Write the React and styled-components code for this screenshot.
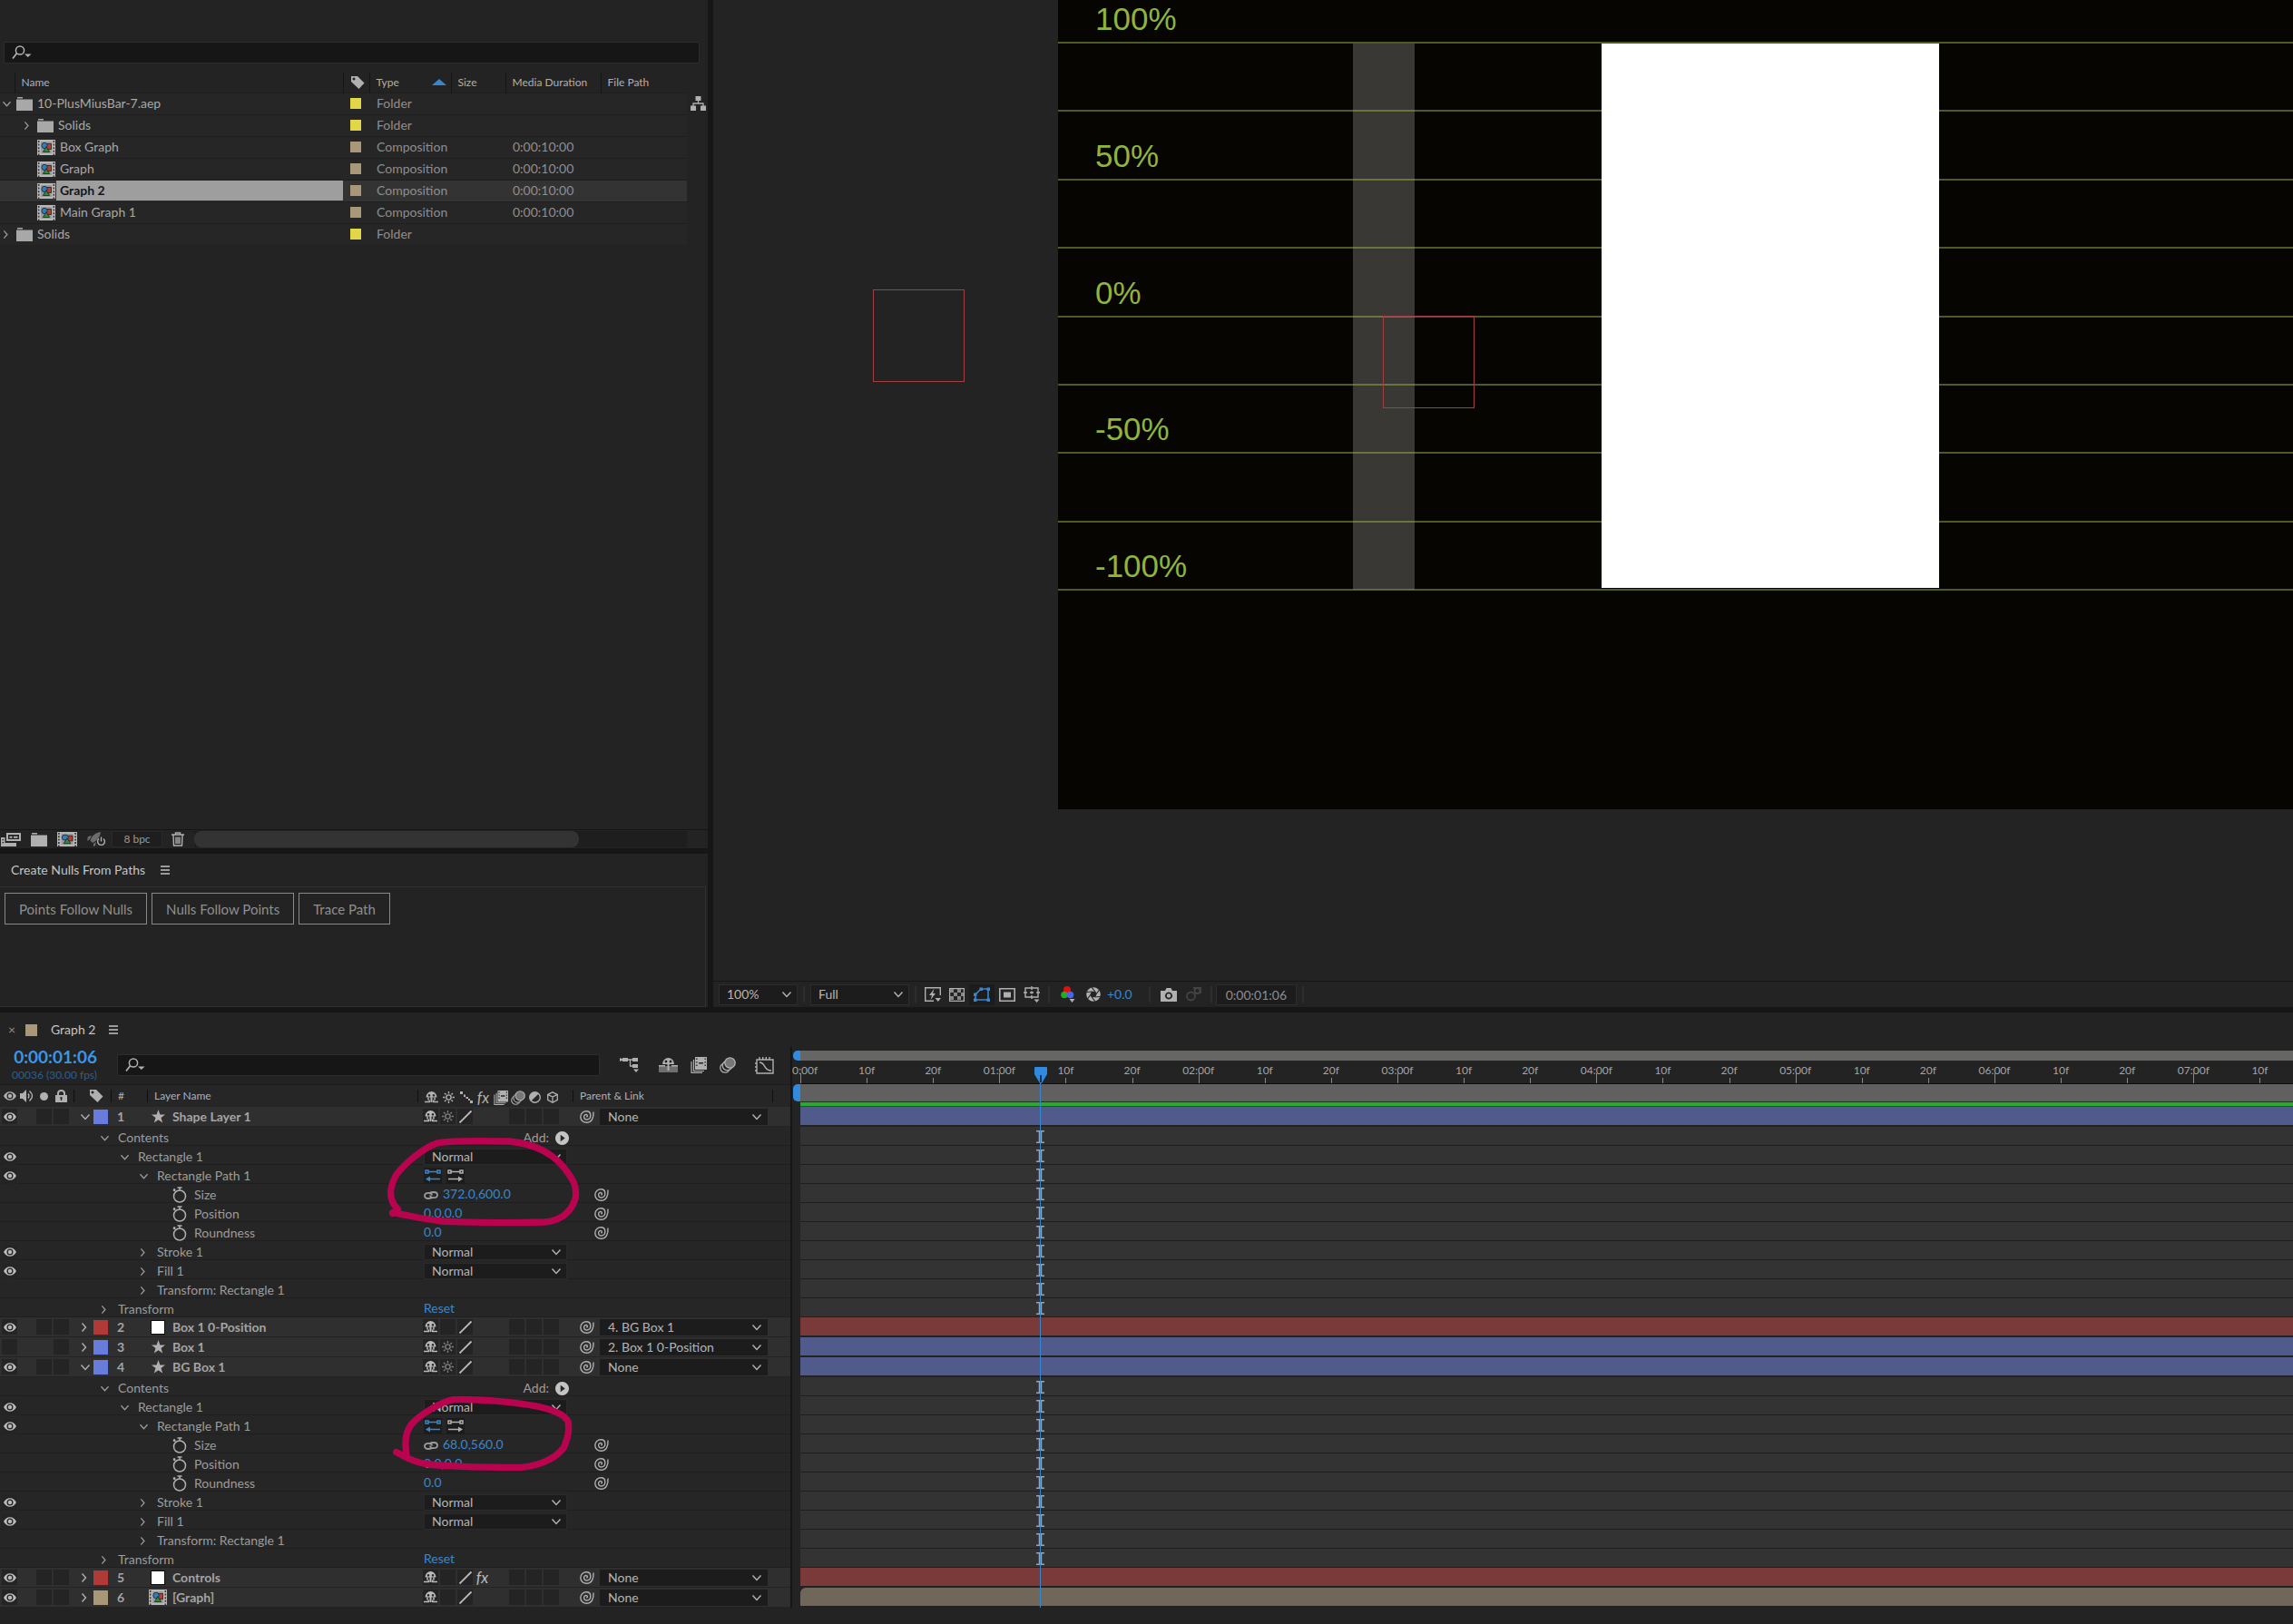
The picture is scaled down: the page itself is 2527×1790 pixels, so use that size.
import React, { useState } from "react";
import styled, { createGlobalStyle } from "styled-components";

const GlobalStyle = createGlobalStyle`
  * {
    box-sizing: border-box;
  }
  body {
    margin: 0;
    background: #161616;
  }
  button, input, select {
    font: inherit;
    color: inherit;
    margin: 0;
  }
`;

const Page = styled.div`
  display: flex;
  flex-direction: column;
  gap: 6px;
  min-height: 100vh;
  font-family: Lato, "Liberation Sans", sans-serif;
  font-size: 14px;
  line-height: 20px;
  color: #b0b0b0;
  background: #161616;
  overflow: hidden;
`;

const Workspace = styled.div`
  display: flex;
  flex: 1;
  gap: 6px;
`;

const Sidebar = styled.div`
  display: flex;
  flex-direction: column;
  flex: none;
  gap: 6px;
  width: 780px;
`;

const Svg = styled.svg`
  display: block;
  flex: none;
  width: ${({ $w }) => $w}px;
  height: ${({ $h, $w }) => $h || $w}px;
  fill: currentColor;
  stroke: none;
  overflow: visible;
`;

const Line = styled(Svg)`
  fill: none;
  stroke: currentColor;
  stroke-width: ${({ $sw }) => $sw || 2};
`;

/* ---------- icons ---------- */

const Chevron = ({ open, size = 10 }) => (
    <Line $w={size} $sw={1.4} viewBox="0 0 10 10">
        <path d={open ? "M0.5 2.5 5 7.5 9.5 2.5" : "M1.5 0.5 5.5 5 1.5 9.5"} />
    </Line>
);

const SearchIcon = () => (
    <Svg $w={22} $h={16} viewBox="0 0 22 16">
        <circle cx="9" cy="5.5" r="4.6" fill="none" stroke="currentColor" strokeWidth="1.5" />
        <path d="M5.5 8.8 1 14.5" stroke="currentColor" strokeWidth="1.8" />
        <path d="M14 9.5h7.5L17.8 13z" />
    </Svg>
);

const TagIcon = () => (
    <Svg $w={16} viewBox="0 0 16 16">
        <path fillRule="evenodd" d="M1 1h7l7.5 7.5L9.5 15 1 7zM4 2.6a1.5 1.5 0 1 0 .01 0z" />
    </Svg>
);

const FolderIcon = () => (
    <Svg $w={18} $h={15} viewBox="0 0 18 15">
        <path d="M1 0h6v1.4H1zM0 2.4h18V15H0z" />
    </Svg>
);

const CompIcon = ({ w = 20, h = 17 }) => (
    <Svg $w={w} $h={h} viewBox="0 0 20 17" preserveAspectRatio="none">
        <path fill="#b8b8b8" d="M0 0h20v17H0z" />
        <path stroke="#3a3a3a" strokeWidth="1.6" strokeDasharray="2 1.6" d="M1.7 1v16M18.3 1v16" />
        <path fill="#9a9a9a" d="M4 2h12v13H4z" />
        <path fill="#c0392f" stroke="#222" strokeWidth=".8" d="M10.5 4.5h5v6h-5z" />
        <circle cx="8" cy="6.5" r="3.2" fill="#2f7fc0" stroke="#222" strokeWidth=".8" />
        <path fill="#2d8a3a" stroke="#222" strokeWidth=".8" d="m10 7.5 3.6 6H6.4z" />
    </Svg>
);

const FlowchartIcon = () => (
    <Svg $w={17} $h={16} viewBox="0 0 17 16">
        <path d="M5.5 0h6v5h-6zM0 10.5h6V16H0zM11 10.5h6V16h-6z" />
        <path fill="none" stroke="currentColor" strokeWidth="1.3" d="M8.5 4v4M3 11V8h11v3" />
    </Svg>
);

const FootageIcon = () => (
    <Svg $w={22} $h={15} viewBox="0 0 22 15">
        <path fillRule="evenodd" d="M6 0h16v9H6zM8 2v5h12V2z" />
        <path d="M9.5 3.7h3v2h-3zM14 3.7h4.5v2H14z" />
        <path fillRule="evenodd" d="M0 5h4.5v6H17v4H0zM1.5 7v1.3H3V7zM1.5 10v1.3H3V10z" />
    </Svg>
);

const RocketIcon = () => (
    <Svg $w={20} $h={16} viewBox="0 0 20 16">
        <path fill="#6c6c6c" d="M15 0C8 1 5 5 3.5 9.5L6 12c4-2 8-5 9-12zM1 5l4-1-2 4-3 2zM7 13l3-2-1 4-2 1z" />
        <path fill="none" stroke="currentColor" strokeWidth="1.4" d="M13 7.5a3.9 3.9 0 1 0 5 0M15.5 5.5v5" />
    </Svg>
);

const TrashIcon = () => (
    <Line $w={14} $h={16} $sw={1.4} viewBox="0 0 14 16">
        <path d="M0 3h14M4.5 3V1h5v2M2 3.5 2.5 15h9L12 3.5M5 5.5V13M7 5.5V13M9 5.5V13" />
    </Line>
);

const MenuIcon = () => (
    <Line $w={10} $h={10} $sw={1.3} viewBox="0 0 10 10">
        <path d="M0 1h10M0 5h10M0 9h10" />
    </Line>
);

const EyeIcon = () => (
    <Svg $w={14} $h={10} viewBox="0 0 14 10">
        <path fillRule="evenodd" d="M7 .2C10 .2 12.5 2.2 14 5 12.5 7.8 10 9.8 7 9.8S1.5 7.8 0 5C1.5 2.2 4 .2 7 .2zM7 1.5A3.5 3.5 0 1 0 7 8.5 3.5 3.5 0 0 0 7 1.5z" />
        <circle cx="7" cy="5" r="2.2" />
    </Svg>
);

const SpeakerIcon = () => (
    <Svg $w={16} $h={14} viewBox="0 0 16 14">
        <path d="M0 4h3l4-4v14l-4-4H0z" />
        <path fill="none" stroke="currentColor" strokeWidth="1.4" d="M9 4.5q1.8 2.5 0 5M10.5 1.5q6 5.5 0 11" />
    </Svg>
);

const LockIcon = () => (
    <Svg $w={13} $h={14} viewBox="0 0 13 14">
        <path fillRule="evenodd" d="M0 6h13v8H0zM6.5 8a1.2 1.2 0 0 0-.7 2.2V12h1.4v-1.8A1.2 1.2 0 0 0 6.5 8z" />
        <path fill="none" stroke="currentColor" strokeWidth="2" d="M3 6.5V4a3.5 3 0 0 1 7 0v2.5" />
    </Svg>
);

const StarIcon = () => (
    <Svg $w={15} viewBox="0 0 15 15">
        <path d="m7.5 0 1.9 5.4H15l-4.5 3.5 1.7 5.7L7.5 11.2l-4.7 3.4 1.7-5.7L0 5.400h5.600z" />
    </Svg>
);

const ShyIcon = () => (
    <Svg $w={15} $h={13} viewBox="0 0 15 13">
        <path fillRule="evenodd" d="M1.5 6.5a6 6.5 0 0 1 12 0zM5 3a1.3 1.3 0 1 0 .01 0zM10 3a1.3 1.3 0 1 0 .01 0z" />
        <path d="M6.500 6h2v6h-2z" />
        <path fill="none" stroke="currentColor" strokeWidth="1.5" d="M4 6.5v3M11 6.5v3M0 11.5h5.3V9.5M9.7 9.5v2H15" />
    </Svg>
);

const SunIcon = () => (
    <Line $w={13} $sw={1.4} viewBox="0 0 13 13">
        <circle cx="6.5" cy="6.5" r="2.6" />
        <path d="M6.5 0v2.5M6.5 10.5V13M0 6.5h2.5M10.5 6.5H13M2 2l1.6 1.6M9.4 9.4 11 11M11 2 9.4 3.6M3.6 9.4 2 11" />
    </Line>
);

const SlashIcon = () => (
    <Line $w={14} $sw={1.8} viewBox="0 0 14 14">
        <path d="M.5 13.5l13-13" />
    </Line>
);

const DashIcon = () => (
    <Svg $w={14} $h={13} viewBox="0 0 14 13">
        <path d="M0 0h3v3H0zM4 3.500h2V6H4zM6.500 6H9v2H6.500zM9 8h2v2H9zM11 10h3v3h-3z" />
    </Svg>
);

const BlendIcon = ({ w = 16 }) => (
    <Svg $w={w} viewBox="0 0 18 18">
        <path fillRule="evenodd" d="M5 0h13v14H5zM6.2 1.5v1.5h1.3V1.5zM6.2 5v1.5h1.3V5zM6.2 8.5V10h1.3V8.5zM15.5 1.5v1.5h1.3V1.5zM15.5 5v1.5h1.3V5zM15.5 8.5V10h1.3V8.5zM9 6v1.500h5V6z" />
        <path fill="none" stroke="currentColor" strokeWidth="1.2" d="M3.5 3v12.5H15M1 5v12.4h12" />
    </Svg>
);

const MotionIcon = ({ w = 16 }) => (
    <Svg $w={w} viewBox="0 0 18 18">
        <g fill="#232323" stroke="currentColor" strokeWidth="1.3">
            <circle cx="6" cy="12" r="5.2" />
            <circle cx="8.5" cy="9.5" r="5.2" />
            <circle cx="11.5" cy="6.5" r="5.7" fill="#777" />
        </g>
    </Svg>
);

const AdjustIcon = () => (
    <Svg $w={13} viewBox="0 0 13 13">
        <circle cx="6.5" cy="6.5" r="5.8" fill="none" stroke="currentColor" strokeWidth="1.4" />
        <path d="M10.6 2.4A5.8 5.8 0 0 0 2.4 10.6z" />
    </Svg>
);

const CubeIcon = () => (
    <Line $w={12} $h={13} $sw={1.3} viewBox="0 0 12 13">
        <path d="M6 .8 11.3 3.3v6L6 12.2.7 9.3v-6zM.7 3.3 6 6l5.3-2.7M6 6v6" />
    </Line>
);

const WhipIcon = () => (
    <Line $w={16} $h={14} $sw={1.4} viewBox="0 0 16 14">
        <path d="M15 1.5C15.500 8 13 13.200 7.500 13.200 3.500 13.200 .8 10.500 .8 7 .8 3.200 4 .8 7.200 .8 10 .8 11.800 2.800 11.800 5.500 11.800 8.500 10 10 7.800 10 5.800 10 4.600 8.700 4.600 7 4.600 5.300 6 4.200 7.500 4.600 8.700 5 8.800 6.800 7.300 7" />
    </Line>
);

const WatchIcon = () => (
    <Line $w={16} $h={18} $sw={1.5} viewBox="0 0 16 18">
        <circle cx="8" cy="10.5" r="6.5" />
        <path d="M5.5 1h5M8 1v3M1.3 2.5l2 2M1 4.5l2-2" />
    </Line>
);

const LinkIcon = () => (
    <Line $w={16} $h={9} $sw={1.8} viewBox="0 0 16 9">
        <path d="M9.5 6.8C8.6 7.6 7 8 5 8 2.5 8 1 6.8 1 5s1.5-3.2 4-3.2S9 3 9 4.5M6.5 2.2C7.4 1.4 9 1 11 1c2.5 0 4 1.2 4 3s-1.5 3.2-4 3.2S7 6 7 4.5" />
    </Line>
);

const PathIcon = ({ back }) => (
    <Line $w={18} $h={14} $sw={1.5} viewBox="0 0 18 14">
        <path d="M1 1h3v3H1zM14 1h3v3h-3zM4 2.500h10" />
        <path d={back ? "M3 10.5h14" : "M1 10.5h14"} />
        <path fill="currentColor" stroke="none" d={back ? "M6 7.5v6L1 10.5z" : "M12 7.5v6l5-3z"} />
    </Line>
);

const AddIcon = () => (
    <Svg $w={15} viewBox="0 0 15 15">
        <path fill="#c4c4c4" fillRule="evenodd" d="M7.5 0a7.5 7.5 0 1 0 .01 0zM5.7 3.7v7.6l5-3.8z" />
    </Svg>
);

const MiniFlowIcon = () => (
    <Svg $w={22} $h={17} viewBox="0 0 22 17">
        <path d="M0 1l5 2-5 2zM3 1h6v4H3zM14 1h6v4h-6zM14 8h6v4h-6zM15 13.5h6L18 17z" />
        <path fill="none" stroke="currentColor" strokeWidth="1.3" d="M9 3h5M11.5 3v7H14" />
    </Svg>
);

const ShyMasterIcon = () => (
    <Svg $w={21} $h={17} viewBox="0 0 21 17">
        <path fill="#6f6f6f" d="M0 10h21v7H0z" />
        <path fillRule="evenodd" d="M4 8a6.5 7 0 0 1 13 0zM8 3.6a1.4 1.4 0 1 0 .01 0zM13 3.6a1.4 1.4 0 1 0 .01 0z" />
        <path d="M9.5 7h2v8h-2zM0 9h7v1.500H0zM14 9h7v1.500h-7z" />
    </Svg>
);

const GraphEditorIcon = () => (
    <Line $w={22} $h={20} $sw={1.4} viewBox="0 0 22 20">
        <path d="M2 4h18v15H2zM5 1v3M8.700 1v3M12.300 1v3M16 1v3M0 8h2M0 12h2M0 16h2M5 7c7 0 4 9 13 9" />
    </Line>
);

const FastIcon = () => (
    <Svg $w={18} $h={16} viewBox="0 0 18 16">
        <path fill="none" stroke="currentColor" strokeWidth="1.4" d="M10 15.3H.7V.7h16.6V9" />
        <path d="m10.5 2-5.5 7h3l-1.5 5 5.5-7H9zM11.5 12H18l-3.2 4z" />
    </Svg>
);

const CheckerIcon = () => (
    <Svg $w={17} $h={15} viewBox="0 0 17 15">
        <path fill="none" stroke="currentColor" strokeWidth="1.2" d="M.6.6h15.8v13.8H.6z" />
        <path fill="#888" d="M1 1h4v4H1zM9 1h4v4H9zM5 5h4v4H5zM13 5h3v4h-3zM1 9h4v4H1zM9 9h4v4H9z" />
    </Svg>
);

const MaskIcon = () => (
    <Line $w={18} $h={16} $sw={1.6} viewBox="0 0 18 16">
        <path d="M2 14V8l6-6h8v12z" />
        <path fill="currentColor" stroke="none" d="M0 12.5h3.5V16H0zM14.5 12.5H18V16h-3.5zM14.5.5H18V4h-3.5zM6.5.5H10V4H6.5zM0 6.5h3.5V10H0z" />
    </Line>
);

const RegionIcon = () => (
    <Svg $w={18} $h={15} viewBox="0 0 18 15">
        <path fill="none" stroke="currentColor" strokeWidth="1.6" d="M.8.8h16.4v13.4H.8z" />
        <path d="M5 4.5h8v6H5z" />
    </Svg>
);

const GuidesIcon = () => (
    <Svg $w={18} $h={18} viewBox="0 0 18 18">
        <path fill="none" stroke="currentColor" strokeWidth="1.4" d="M2 2h14v10H2zM9 0v4M9 10v4M0 7h4M14 7h4M7 7h4M9 5.5v3" />
        <path d="M11.5 14.5h6L14.5 18z" />
    </Svg>
);

const RgbIcon = () => (
    <Svg $w={16} $h={18} viewBox="0 0 16 18">
        <circle cx="7" cy="4" r="4" fill="#e01010" />
        <circle cx="4" cy="9.5" r="3.8" fill="#1fae1f" />
        <circle cx="10.5" cy="9.5" r="3.8" fill="#4a66e0" />
        <path d="M9.5 14h6l-3 4z" />
    </Svg>
);

const ApertureIcon = () => (
    <Svg $w={16} viewBox="0 0 16 16">
        <circle cx="8" cy="8" r="5.5" fill="none" stroke="currentColor" strokeWidth="4.6" />
        <path fill="none" stroke="#232323" strokeWidth="1.2" d="M6 0l4.5 6M14.5 3l-4 5.5M15.5 10.5 9.5 11M10 16l-4.5-6M1.5 13l4-5.5M.5 5.5 7 5" />
    </Svg>
);

const CameraIcon = () => (
    <Svg $w={18} $h={15} viewBox="0 0 18 15">
        <path fillRule="evenodd" d="M0 3h5l1.5-3h5L13 3h5v12H0zM9 4.5a4 4 0 1 0 .01 0z" />
        <circle cx="9" cy="8.5" r="2.2" />
    </Svg>
);

const SnapshotIcon = () => (
    <Line $w={18} $h={16} $sw={1.8} viewBox="0 0 18 16">
        <circle cx="6.5" cy="10" r="4.5" />
        <circle cx="13.5" cy="4" r="3" />
        <path d="M9 1h8v6" />
    </Line>
);

/* ---------- project panel ---------- */

const Panel = styled.section`
  display: flex;
  flex-direction: column;
  background: #232323;
`;

const ProjectPanel = styled(Panel)`
  flex: 1;
  padding-top: 46px;
`;

const SearchBox = styled.label`
  display: flex;
  align-items: center;
  flex: 1;
  gap: 8px;
  height: 24px;
  padding: 0 8px;
  background: #161616;
  border: 1px solid #2d2d2d;
  border-radius: 2px;
  input {
    flex: 1;
    min-width: 0;
    height: 20px;
    padding: 0;
    border: none;
    outline: none;
    background: transparent;
  }
`;

const ProjectSearch = styled.div`
  display: flex;
  padding: 0 9px 0 4px;
  margin-bottom: 10px;
`;

const ProjectTable = styled.table`
  width: 100%;
  table-layout: fixed;
  border-collapse: collapse;
  th {
    height: 22px;
    padding: 0 0 0 7px;
    font-size: 12px;
    font-weight: 400;
    text-align: left;
    white-space: nowrap;
    border-left: 1px solid #161616;
  }
  th:first-child, th:last-child {
    border-left: none;
  }
  td {
    height: 24px;
    padding: 0 0 0 8px;
    color: #8e8e8e;
    border-top: 1px solid #1f1f1f;
  }
  td:last-child {
    border-top-color: #232323;
    background: #232323;
    padding: 0 4px;
    color: #b0b0b0;
  }
`;

const ItemRow = styled.tr`
  background: ${({ $selected }) => ($selected ? "#333333" : "#262626")};
`;

const HeadCell = styled.div`
  display: flex;
  align-items: center;
  justify-content: space-between;
  padding-right: 5px;
`;

const SortArrow = styled.span`
  border: 8px solid transparent;
  border-top: none;
  border-bottom: 7px solid #3787d0;
`;

const ItemName = styled.div`
  display: flex;
  align-items: center;
  height: 22px;
  padding-left: ${({ $child }) => ($child ? 23 : 0)}px;
  margin-left: -9px;
  color: #a8a8a8;
`;

const Twirl = styled.span`
  display: flex;
  justify-content: center;
  flex: none;
  width: 16px;
  margin-right: 3px;
  color: #9a9a9a;
`;

const ItemLabel = styled.span`
  display: flex;
  align-items: center;
  align-self: stretch;
  flex: 1;
  padding-left: 4px;
  margin-left: 1px;
  color: ${({ $selected }) => ($selected ? "#161616" : "inherit")};
  font-weight: ${({ $selected }) => ($selected ? 700 : 400)};
  background: ${({ $selected }) => ($selected ? "#9e9e9e" : "transparent")};
`;

const Swatch = styled.span`
  display: block;
  flex: none;
  width: ${({ $size }) => $size}px;
  height: ${({ $size }) => $size}px;
  background: ${({ $color }) => $color};
`;

const ProjectFooter = styled.div`
  display: flex;
  align-items: center;
  gap: 11px;
  height: 21px;
  margin-top: auto;
  padding: 0 23px 0 1px;
  border-top: 1px solid #161616;
`;

const IconButton = styled.button`
  display: flex;
  align-items: center;
  justify-content: center;
  flex: none;
  width: ${({ $w }) => ($w ? `${$w}px` : "auto")};
  height: ${({ $h }) => ($h ? `${$h}px` : "auto")};
  padding: 0;
  border: none;
  color: ${({ $color }) => $color || "#b0b0b0"};
  background: ${({ $bg }) => $bg || "transparent"};
`;

const Depth = styled.button`
  width: 56px;
  height: 18px;
  padding: 0;
  margin: 0 -1px 0 -4px;
  font-size: 12px;
  line-height: 16px;
  color: #9a9a9a;
  background: #1e1e1e;
  border: 1px solid #292929;
`;

const ScrollTrack = styled.div`
  flex: 1;
  height: 18px;
  background: #1e1e1e;
`;

const ScrollThumb = styled.div`
  width: 78%;
  height: 18px;
  border-radius: 8px;
  background: #333333;
`;

const NullsPanel = styled(Panel)`
  padding-right: 2px;
`;

const NullsTitle = styled.div`
  display: flex;
  align-items: center;
  gap: 17px;
  height: 36px;
  padding: 0 12px;
  color: #c4c4c4;
`;

const NullsBody = styled.div`
  display: flex;
  align-items: flex-start;
  gap: 5px;
  min-height: 133px;
  padding: 6px 5px;
  border: 1px solid #2f2f2f;
  border-left: none;
`;

const ScriptButton = styled.button`
  height: 35px;
  padding: 0 15px;
  font-size: 15px;
  color: #8f8f8f;
  background: transparent;
  border: 1px solid #8a8a8a;
`;

const YELLOW = "#e0d648";
const SAND = "#a89878";

const items = [
    { name: "10-PlusMiusBar-7.aep", type: "Folder", open: true },
    { name: "Solids", type: "Folder", child: true, open: false },
    { name: "Box Graph", type: "Composition", child: true },
    { name: "Graph", type: "Composition", child: true },
    { name: "Graph 2", type: "Composition", child: true, selected: true },
    { name: "Main Graph 1", type: "Composition", child: true },
    { name: "Solids", type: "Folder", open: false },
];

const Project = () => (
    <ProjectPanel>
        <ProjectSearch>
            <SearchBox>
                <SearchIcon />
                <input type="text" aria-label="Search project" />
            </SearchBox>
        </ProjectSearch>
        <ProjectTable>
            <colgroup>
                <col width="16" />
                <col width="362" />
                <col width="29" />
                <col width="90" />
                <col width="60" />
                <col width="105" />
                <col width="95" />
                <col width="23" />
            </colgroup>
            <thead>
                <tr>
                    <th />
                    <th>Name</th>
                    <th><TagIcon /></th>
                    <th><HeadCell>Type<SortArrow /></HeadCell></th>
                    <th>Size</th>
                    <th>Media Duration</th>
                    <th>File Path</th>
                    <th />
                </tr>
            </thead>
            <tbody>
                {items.map((item, i) => (
                    <ItemRow key={i} $selected={item.selected}>
                        <td colSpan="2">
                            <ItemName $child={item.child}>
                                <Twirl>
                                    {item.type === "Folder" && <Chevron open={item.open} size={9} />}
                                </Twirl>
                                {item.type === "Folder" ? <FolderIcon /> : <CompIcon />}
                                <ItemLabel $selected={item.selected}>{item.name}</ItemLabel>
                            </ItemName>
                        </td>
                        <td><Swatch $size={12} $color={item.type === "Folder" ? YELLOW : SAND} /></td>
                        <td>{item.type}</td>
                        <td />
                        <td>{item.type === "Composition" && "0:00:10:00"}</td>
                        <td />
                        <td>{i === 0 && <FlowchartIcon />}</td>
                    </ItemRow>
                ))}
            </tbody>
        </ProjectTable>
        <ProjectFooter>
            <IconButton aria-label="Interpret footage"><FootageIcon /></IconButton>
            <IconButton aria-label="New folder"><FolderIcon /></IconButton>
            <IconButton aria-label="New composition"><CompIcon w={22} h={16} /></IconButton>
            <IconButton aria-label="Project settings"><RocketIcon /></IconButton>
            <Depth>8 bpc</Depth>
            <IconButton aria-label="Delete"><TrashIcon /></IconButton>
            <ScrollTrack><ScrollThumb /></ScrollTrack>
        </ProjectFooter>
    </ProjectPanel>
);

const Nulls = () => (
    <NullsPanel>
        <NullsTitle>
            Create Nulls From Paths
            <MenuIcon />
        </NullsTitle>
        <NullsBody>
            <ScriptButton>Points Follow Nulls</ScriptButton>
            <ScriptButton>Nulls Follow Points</ScriptButton>
            <ScriptButton>Trace Path</ScriptButton>
        </NullsBody>
    </NullsPanel>
);

/* ---------- viewer ---------- */

const ViewerPanel = styled(Panel)`
  flex: 1;
  min-width: 0;
`;

const Stage = styled.div`
  position: relative;
  flex: 1;
  overflow: hidden;
`;

const Comp = styled.div`
  position: absolute;
  top: 0;
  left: 380px;
  right: 0;
  height: 892px;
  background: #060501;
`;

const Scale = styled.div`
  position: absolute;
  top: 46px;
  left: 0;
  right: 0;
  height: 605px;
  display: flex;
  flex-direction: column;
  justify-content: space-between;
`;

const GridLine = styled.div`
  position: relative;
  height: 2px;
  background: rgba(150, 178, 72, 0.5);
`;

const GridLabel = styled.span`
  position: absolute;
  left: 41px;
  bottom: 7px;
  font-family: "Liberation Sans", Arial, sans-serif;
  font-size: 35px;
  line-height: 40px;
  color: #90b43c;
`;

const Bar = styled.div`
  position: absolute;
  top: 48px;
  left: ${({ $x }) => $x}px;
  width: ${({ $w }) => $w}px;
  height: ${({ $h }) => $h}px;
  background: ${({ $color }) => $color};
`;

const NullBox = styled.div`
  position: absolute;
  left: ${({ $x }) => $x}px;
  top: ${({ $y }) => $y}px;
  width: 101px;
  height: 102px;
  border: 1px solid #a04040;
`;

const ViewerBar = styled.div`
  display: flex;
  align-items: center;
  height: 29px;
  padding-left: 6px;
  border-top: 1px solid #161616;
`;

const BarDivider = styled.span`
  width: 2px;
  height: 18px;
  margin: 0 ${({ $after }) => $after || 6}px 0 6px;
  background: #2d2d2d;
`;

const SelectWrap = styled.label`
  position: relative;
  display: flex;
  flex: none;
  width: ${({ $w }) => $w}px;
  height: ${({ $h }) => $h || 18}px;
  background: #1c1c1c;
  border: 1px solid ${({ $edge }) => $edge || "#1c1c1c"};
  color: #b4b4b4;
  select {
    flex: 1;
    min-width: 0;
    padding: 0 8px;
    line-height: 16px;
    appearance: none;
    border: none;
    outline: none;
    background: transparent;
  }
  svg {
    position: absolute;
    right: 6px;
    top: calc(50% - 5px);
    pointer-events: none;
  }
`;

const Select = ({ value, label, width, height, edge }) => (
    <SelectWrap $w={width} $h={height} $edge={edge}>
        <select aria-label={label} defaultValue={value}>
            <option>{value}</option>
        </select>
        <Chevron open />
    </SelectWrap>
);

const Exposure = styled.button`
  padding: 0;
  margin: 0 12px 0 1px;
  border: none;
  background: transparent;
  color: #3787d0;
`;

const TimeBox = styled.div`
  height: 23px;
  padding: 0 10px;
  line-height: 21px;
  color: #8e8e8e;
  background: #1c1c1c;
  border: 1px solid #2d2d2d;
`;

const gridLines = ["100%", "", "50%", "", "0%", "", "-50%", "", "-100%"];

const Viewer = () => (
    <ViewerPanel>
        <Stage>
            <Comp>
                <Bar $x={325} $w={68} $h={602} $color="#3a3835" />
                <Scale>
                    {gridLines.map((label, i) => (
                        <GridLine key={i}>
                            {label && <GridLabel>{label}</GridLabel>}
                        </GridLine>
                    ))}
                </Scale>
                <Bar $x={599} $w={372} $h={600} $color="#ffffff" />
            </Comp>
            <NullBox $x={176} $y={319} />
            <NullBox $x={738} $y={348} />
        </Stage>
        <ViewerBar>
            <Select label="Magnification" value="100%" width={87} height={23} edge="#2d2d2d" />
            <BarDivider />
            <Select label="Resolution" value="Full" width={109} height={23} edge="#2d2d2d" />
            <BarDivider $after={4} />
            <IconButton $w={27} $h={23} aria-label="Fast previews"><FastIcon /></IconButton>
            <IconButton $w={27} $h={23} aria-label="Transparency grid"><CheckerIcon /></IconButton>
            <IconButton $w={28} $h={23} $color="#3787d0" $bg="#1c1c1c" aria-label="Mask visibility"><MaskIcon /></IconButton>
            <IconButton $w={28} $h={23} aria-label="Region of interest"><RegionIcon /></IconButton>
            <IconButton $w={25} $h={23} aria-label="Guides"><GuidesIcon /></IconButton>
            <BarDivider />
            <IconButton $w={28} $h={23} aria-label="Channels"><RgbIcon /></IconButton>
            <IconButton $w={28} $h={23} aria-label="Reset exposure"><ApertureIcon /></IconButton>
            <Exposure>+0.0</Exposure>
            <BarDivider />
            <IconButton $w={28} $h={23} aria-label="Take snapshot"><CameraIcon /></IconButton>
            <IconButton $w={26} $h={23} $color="#444444" aria-label="Show snapshot"><SnapshotIcon /></IconButton>
            <BarDivider $after={4} />
            <TimeBox>0:00:01:06</TimeBox>
            <BarDivider />
        </ViewerBar>
    </ViewerPanel>
);

/* ---------- timeline ---------- */

const TimelinePanel = styled(Panel)`
  position: relative;
  padding-bottom: 18px;
`;

const TabRow = styled.div`
  display: flex;
  align-items: center;
  height: 38px;
  padding-left: 9px;
  color: #c4c4c4;
`;

const TabTitle = styled.span`
  margin: 0 15px;
`;

const CloseMark = styled.button`
  width: 8px;
  padding: 0;
  margin-right: 11px;
  border: none;
  background: transparent;
  color: #8e8e8e;
`;

const TimelineBody = styled.div`
  display: flex;
`;

const LayerColumn = styled.div`
  display: flex;
  flex-direction: column;
  flex: none;
  width: 873px;
`;

const TimelineTop = styled.div`
  display: flex;
  align-items: center;
  height: 41px;
  padding-right: 19px;
`;

const Clock = styled.div`
  width: 107px;
  margin-right: 22px;
  text-align: right;
  color: #3c96e8;
  font-size: 19px;
  font-weight: 700;
  line-height: 20px;
  div {
    font-size: 12px;
    font-weight: 400;
    color: #2b5f8f;
  }
`;

const TimelineSearch = styled.div`
  display: flex;
  width: 532px;
  margin-bottom: 2px;
`;

const TopIcons = styled.div`
  display: flex;
  flex: 1;
  align-items: center;
  justify-content: space-between;
  margin: 0 0 2px 22px;
`;

const IconGroup = styled.div`
  display: flex;
  align-items: center;
  gap: 14px;
`;

const RowBase = styled.div`
  display: grid;
  align-items: center;
  white-space: nowrap;
`;

const LayerLine = styled(RowBase)`
  grid-template-columns: 21px 18px 19px 19px 26px 26px 37px 16px 1fr 171px 242px;
  height: 22px;
  background: #2f2f2f;
  border-bottom: 1px solid #232323;
`;

const HeaderLine = styled(RowBase)`
  grid-template-columns: 21px 18px 19px 19px 4px 41px 40px 1fr 171px 220px 22px;
  height: 25px;
  font-size: 12px;
  background: #262626;
  border-top: 1px solid #1c1c1c;
`;

const PropertyLine = styled(RowBase)`
  grid-template-columns: 21px 60px 1fr 171px 242px;
  height: 21px;
  padding-top: 2px;
  background: #262626;
  border-bottom: 1px solid #1f1f1f;
`;

const Cell = styled.div`
  display: flex;
  align-items: center;
  justify-content: ${({ $center }) => ($center ? "center" : "flex-start")};
  padding-left: ${({ $pad }) => $pad || 0}px;
`;

const HeadText = styled.span`
  display: flex;
  align-items: center;
  height: 14px;
  line-height: 14px;
  padding-left: ${({ $pad }) => $pad || 7}px;
  border-left: 1px solid #101010;
`;

const Well = styled.span`
  display: flex;
  align-items: center;
  justify-content: center;
  width: 17px;
  height: 17px;
  background: ${({ $bare }) => ($bare ? "transparent" : "#242424")};
  color: ${({ $dim }) => ($dim ? "#7e7e7e" : "#bababa")};
`;

const Dot = styled.span`
  width: 9px;
  height: 9px;
  border-radius: 50%;
  background: #b0b0b0;
`;

const LayerName = styled.span`
  padding-left: 8px;
  font-weight: 700;
  color: #a4a4a4;
`;

const LayerNumber = styled.span`
  font-weight: 700;
  color: #a4a4a4;
`;

const NullMark = styled.span`
  flex: none;
  width: 16px;
  height: 16px;
  background: #ffffff;
  border: 1px solid #0c0c0c;
`;

const Switches = styled.div`
  display: grid;
  grid-template-columns: repeat(8, 19px);
  padding-left: 5px;
  justify-items: center;
  align-items: center;
`;

const HeadSwitches = styled(Switches)`
  height: 14px;
  border-left: 1px solid #101010;
`;

const Fx = styled.span`
  font-size: 17px;
  line-height: 17px;
  font-style: italic;
`;

const Parent = styled.div`
  display: flex;
  align-items: center;
  gap: 6px;
  padding-left: 8px;
`;

const PropertyName = styled.div`
  display: flex;
  align-items: center;
  padding-left: ${({ $depth }) => [26, 48, 69, 92][$depth]}px;
  color: #9c9c9c;
`;

const PropertyTwirl = styled.span`
  display: flex;
  justify-content: center;
  width: 16px;
  margin-right: 7px;
`;

const Watch = styled.span`
  display: flex;
  margin: 0 8px 0 17px;
  color: #b0b0b0;
`;

const ValueCell = styled.div`
  display: flex;
  align-items: center;
  justify-content: ${({ $end }) => ($end ? "flex-end" : "flex-start")};
  gap: ${({ $gap }) => $gap || 0}px;
  padding: 0 4px 0 7px;
  color: #9c9c9c;
`;

const Value = styled.button`
  padding: 0 0 2px;
  border: none;
  line-height: 18px;
  background: transparent;
  color: #3787d0;
`;

const TrackColumn = styled.div`
  position: relative;
  flex: 1;
  min-width: 0;
  padding-left: 9px;
  border-left: 2px solid #161616;
  margin-left: -2px;
  overflow: hidden;
`;

const Navigator = styled.div`
  position: relative;
  height: 15px;
  padding-top: 4px;
`;

const NavigatorBar = styled.div`
  height: 11px;
  background: #666764;
`;

const Handle = styled.span`
  position: absolute;
  left: -8px;
  bottom: 0;
  width: 8px;
  height: ${({ $h }) => $h}px;
  border-radius: 5px 0 0 5px;
  background: #2f8ae0;
`;

const Ruler = styled.div`
  display: grid;
  grid-template-columns: repeat(22, 2fr) 1fr;
  height: 26px;
  padding-top: 1px;
  border-bottom: 1px solid #0c0c0c;
  font-size: 12px;
  color: #a4a4a4;
`;

const Tick = styled.div`
  position: relative;
  min-width: 0;
  &::after {
    content: "";
    position: absolute;
    left: 0;
    bottom: 0;
    width: 1px;
    height: ${({ $major }) => ($major ? 11 : 6)}px;
    background: #8a8a8a;
  }
  span {
    display: flex;
    justify-content: center;
    width: 0;
  }
  &:first-child span {
    justify-content: flex-start;
    margin-left: -9px;
  }
`;

const WorkArea = styled.div`
  position: relative;
  height: 19px;
  background: #606060;
`;

const CacheBar = styled.div`
  height: 6px;
  background: #2aa832;
  border-top: 1px solid #123a14;
  border-bottom: 1px solid #1d5a22;
`;

const LayerTrack = styled.div`
  height: 22px;
  background: ${({ $color }) => $color};
  border-bottom: 2px solid #222222;
  border-top-left-radius: ${({ $comp }) => ($comp ? 6 : 0)}px;
`;

const PropertyTrack = styled.div`
  position: relative;
  height: 21px;
  background: #333333;
  border-bottom: 1px solid #1f1f1f;
`;

const IBeam = styled.span`
  position: absolute;
  top: 4px;
  width: 9px;
  height: 14px;
  margin-left: -3px;
  color: #9aa4ac;
`;

const Playhead = styled.div`
  position: absolute;
  top: 22px;
  bottom: 0;
  left: 9px;
  right: 0;
  pointer-events: none;
`;

const PlayheadLine = styled.div`
  position: absolute;
  top: 0;
  bottom: 0;
  width: 1px;
  margin-left: 1px;
  background: #3787d0;
  svg {
    margin-left: -6px;
  }
`;

const Marking = styled.svg`
  position: absolute;
  left: 420px;
  top: ${({ $top }) => $top}px;
  width: 240px;
  height: 110px;
  fill: none;
  stroke: #b9034f;
  stroke-width: 22;
  stroke-linecap: round;
  stroke-linejoin: round;
  pointer-events: none;
  overflow: visible;
`;

const BLUE = { label: "#687cdc", bar: "#515b8b" };
const RED = { label: "#b03a38", bar: "#7b3a3a" };
const TAN = { label: "#a89878", bar: "#70675a" };

const shapeProps = (size) => [
    { name: "Contents", depth: 0, open: true, add: true },
    { name: "Rectangle 1", depth: 1, open: true, eye: true, mode: true },
    { name: "Rectangle Path 1", depth: 2, open: true, eye: true, direction: true },
    { name: "Size", depth: 3, value: size, linked: true },
    { name: "Position", depth: 3, value: "0.0,0.0" },
    { name: "Roundness", depth: 3, value: "0.0" },
    { name: "Stroke 1", depth: 2, eye: true, mode: true },
    { name: "Fill 1", depth: 2, eye: true, mode: true },
    { name: "Transform: Rectangle 1", depth: 2 },
    { name: "Transform", depth: 0, value: "Reset" },
];

const layers = [
    { name: "Shape Layer 1", kind: "shape", color: BLUE, eye: true, parent: "None", props: shapeProps("372.0,600.0") },
    { name: "Box 1 0-Position", kind: "null", color: RED, eye: true, parent: "4. BG Box 1" },
    { name: "Box 1", kind: "shape", color: BLUE, noSolo: true, parent: "2. Box 1 0-Position" },
    { name: "BG Box 1", kind: "shape", color: BLUE, eye: true, parent: "None", props: shapeProps("68.0,560.0") },
    { name: "Controls", kind: "null", color: RED, eye: true, fx: true, parent: "None" },
    { name: "[Graph]", kind: "comp", color: TAN, eye: true, parent: "None" },
];

const kindIcons = { shape: <StarIcon />, null: <NullMark />, comp: <CompIcon /> };

const LayerRow = ({ layer, number }) => (
    <LayerLine>
        <Cell $center><Well>{layer.eye && <EyeIcon />}</Well></Cell>
        <Cell />
        <Cell $center>{!layer.noSolo && <Well />}</Cell>
        <Cell $center><Well /></Cell>
        <Cell $pad={12}><Chevron open={!!layer.props} /></Cell>
        <Cell><Swatch $size={16} $color={layer.color.label} /></Cell>
        <LayerNumber>{number}</LayerNumber>
        <Cell $center>{kindIcons[layer.kind]}</Cell>
        <LayerName>{layer.name}</LayerName>
        <Switches>
            <Well><ShyIcon /></Well>
            <Well $dim>{layer.kind === "shape" && <SunIcon />}</Well>
            <Well><SlashIcon /></Well>
            <Well $bare>{layer.fx && <Fx>fx</Fx>}</Well>
            <Well $bare />
            <Well />
            <Well />
            <Well />
        </Switches>
        <Parent>
            <WhipIcon />
            <Select label={`Parent of ${layer.name}`} value={layer.parent} width={185} />
        </Parent>
    </LayerLine>
);

const PropertyRow = ({ prop }) => (
    <PropertyLine>
        <Cell $center>{prop.eye && <Well><EyeIcon /></Well>}</Cell>
        <Cell />
        <PropertyName $depth={prop.depth}>
            {prop.depth === 3 ? (
                <Watch><WatchIcon /></Watch>
            ) : (
                <PropertyTwirl><Chevron open={prop.open} size={9} /></PropertyTwirl>
            )}
            {prop.name}
        </PropertyName>
        <ValueCell $end={prop.add} $gap={prop.add ? 7 : 5}>
            {prop.add && <>Add: <AddIcon /></>}
            {prop.mode && (
                <Select label={`${prop.name} mode`} value="Normal" width={158} edge="#2a2a2a" />
            )}
            {prop.direction && (
                <>
                    <IconButton $w={20} $h={18} $color="#3787d0" $bg="#1c1c1c" aria-label="Reverse path"><PathIcon back /></IconButton>
                    <IconButton $w={20} $h={18} $bg="#1c1c1c" aria-label="Forward path"><PathIcon /></IconButton>
                </>
            )}
            {prop.linked && <LinkIcon />}
            {prop.value && <Value>{prop.value}</Value>}
        </ValueCell>
        <Cell $pad={24}>{prop.depth === 3 && <WhipIcon />}</Cell>
    </PropertyLine>
);

const IBeamMark = ({ left }) => (
    <IBeam style={{ left }}>
        <Line $w={9} $h={14} $sw={1.5} viewBox="0 0 9 14">
            <path d="M0 .8h9M0 13.2h9" />
            <path strokeWidth="3.5" d="M4.5 1v12" />
        </Line>
    </IBeam>
);

const tickLabel = (i) => {
    const frames = (i % 3) * 10;
    if (i === 0) return "0:00f";
    return frames ? `${frames}f` : `0${i / 3}:00f`;
};

const ticks = Array.from({ length: 23 }, (_, i) => i);
const visibleFrames = 225;

const Timeline = () => {
    const [frame] = useState(36);
    const left = `${(frame / visibleFrames) * 100}%`;

    return (
        <TimelinePanel>
            <TabRow>
                <CloseMark aria-label="Close tab">×</CloseMark>
                <Swatch $size={13} $color={SAND} />
                <TabTitle>Graph 2</TabTitle>
                <MenuIcon />
            </TabRow>
            <TimelineBody>
                <LayerColumn>
                    <TimelineTop>
                        <Clock>
                            0:00:01:06
                            <div>00036 (30.00 fps)</div>
                        </Clock>
                        <TimelineSearch>
                            <SearchBox>
                                <SearchIcon />
                                <input type="text" aria-label="Search layers" />
                            </SearchBox>
                        </TimelineSearch>
                        <TopIcons>
                            <MiniFlowIcon />
                            <IconGroup>
                                <ShyMasterIcon />
                                <BlendIcon w={18} />
                                <MotionIcon w={18} />
                            </IconGroup>
                            <GraphEditorIcon />
                        </TopIcons>
                    </TimelineTop>
                    <HeaderLine>
                        <Cell $center><EyeIcon /></Cell>
                        <Cell $center><SpeakerIcon /></Cell>
                        <Cell $center><Dot /></Cell>
                        <Cell $center><LockIcon /></Cell>
                        <Cell />
                        <HeadText $pad={16}><TagIcon /></HeadText>
                        <HeadText>#</HeadText>
                        <HeadText>Layer Name</HeadText>
                        <HeadSwitches>
                            <ShyIcon />
                            <SunIcon />
                            <DashIcon />
                            <Fx>fx</Fx>
                            <BlendIcon />
                            <MotionIcon />
                            <AdjustIcon />
                            <CubeIcon />
                        </HeadSwitches>
                        <HeadText>Parent &amp; Link</HeadText>
                        <HeadText />
                    </HeaderLine>
                    {layers.map((layer, i) => (
                        <React.Fragment key={layer.name}>
                            <LayerRow layer={layer} number={i + 1} />
                            {layer.props?.map((prop) => <PropertyRow key={prop.name} prop={prop} />)}
                        </React.Fragment>
                    ))}
                </LayerColumn>
                <TrackColumn>
                    <Navigator>
                        <Handle $h={11} />
                        <NavigatorBar />
                    </Navigator>
                    <Ruler>
                        {ticks.map((i) => (
                            <Tick key={i} $major={i % 3 === 0}><span>{tickLabel(i)}</span></Tick>
                        ))}
                    </Ruler>
                    <WorkArea><Handle $h={19} /></WorkArea>
                    <CacheBar />
                    {layers.map((layer) => (
                        <React.Fragment key={layer.name}>
                            <LayerTrack $color={layer.color.bar} $comp={layer.kind === "comp"} />
                            {layer.props?.map((prop) => (
                                <PropertyTrack key={prop.name}><IBeamMark left={left} /></PropertyTrack>
                            ))}
                        </React.Fragment>
                    ))}
                    <Playhead>
                        <PlayheadLine style={{ left }}>
                            <Svg $w={14} $h={18} viewBox="0 0 14 18">
                                <path fill="#2f8ae0" d="M0 1q0-1 1-1h12q1 0 1 1v7L8 18H6L0 8z" />
                                <path fill="#16324c" d="M6 9h2v8H6z" />
                            </Svg>
                        </PlayheadLine>
                    </Playhead>
                </TrackColumn>
            </TimelineBody>
            <Marking $top={134} viewBox="0 420 720 330">
                <path d="M38 682 55 668C25 640 25 600 50 555C75 520 140 465 185 450C230 440 330 443 420 444C500 450 560 480 600 525C635 570 648 590 643 630C630 680 590 708 540 711C430 714 300 713 200 708C130 700 90 688 38 680" />
            </Marking>
            <Marking $top={414} viewBox="0 300 720 330">
                <path d="M50 512C80 525 90 540 150 551C230 562 350 562 465 562C530 556 580 530 605 495C620 460 622 430 618 410C605 385 560 370 520 361C440 345 310 335 240 338C200 345 130 385 100 420C75 455 80 490 84 525" />
            </Marking>
        </TimelinePanel>
    );
};

const App = () => (
    <Page>
        <GlobalStyle />
        <Workspace>
            <Sidebar>
                <Project />
                <Nulls />
            </Sidebar>
            <Viewer />
        </Workspace>
        <Timeline />
    </Page>
);

export default App;
